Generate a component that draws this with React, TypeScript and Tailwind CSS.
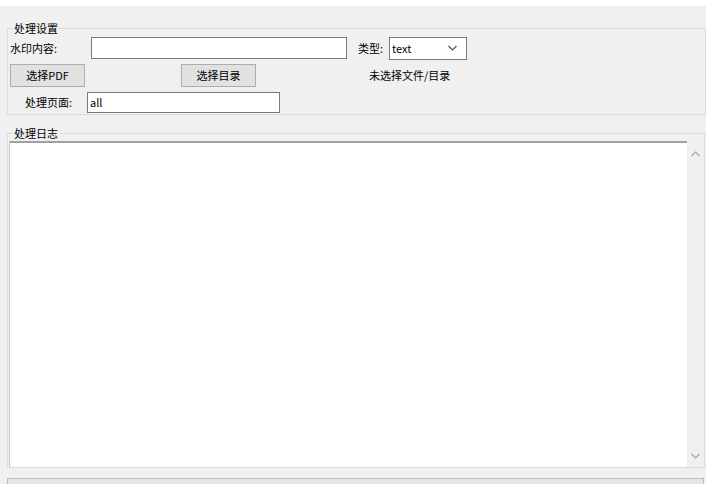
import React from 'react';

const font = { fontFamily: '"Noto Sans CJK SC", "Noto Sans", sans-serif' };

function Btn({ children }: { children: React.ReactNode }) {
  return (
    <div className="flex h-[23px] w-[75px] items-center justify-center border border-[#adadad] bg-[#e1e1e1] text-black">
      {children}
    </div>
  );
}

function Chevron({ up, className }: { up?: boolean; className?: string }) {
  return (
    <svg width="9" height="6" viewBox="0 0 9 6" className={className}>
      <path
        d={up ? 'M0.5 5 L4.5 1 L8.5 5' : 'M0.5 1 L4.5 5 L8.5 1'}
        fill="none"
        stroke="currentColor"
        strokeWidth="1.2"
      />
    </svg>
  );
}

export default function App() {
  return (
    <div
      className="flex h-[484px] w-[706px] flex-col overflow-hidden bg-[#f0f0f0] text-[11px] leading-none text-black"
      style={font}
    >
      <div className="h-[6px] shrink-0 bg-white" />

      {/* 处理设置 */}
      <div className="relative ml-[7px] mt-[22px] h-[87px] w-[699px] shrink-0 border border-[#dcdcdc]">
        <span className="absolute -top-[8px] left-[5px] bg-[#f0f0f0] px-[1px] leading-[14px]">处理设置</span>

        <div className="mt-[8px] flex h-[22px] items-center">
          <span className="ml-[2px] w-[81px]">水印内容:</span>
          <div className="h-[22px] w-[256px] border border-[#7a7a7a] bg-white" />
          <span className="ml-[11px] w-[31px]">类型:</span>
          <div className="flex h-[23px] w-[78px] items-center justify-between border border-[#7a7a7a] bg-white pl-[2px] pr-[9px]">
            <span>text</span>
            <Chevron className="text-[#555]" />
          </div>
        </div>

        <div className="mt-[5px] flex h-[23px] items-center">
          <div className="ml-[2px]">
            <Btn>选择PDF</Btn>
          </div>
          <div className="ml-[96px]">
            <Btn>选择目录</Btn>
          </div>
          <span className="ml-[113px]">未选择文件/目录</span>
        </div>

        <div className="mt-[5px] flex h-[21px] items-center">
          <span className="ml-[17px] w-[62px]">处理页面:</span>
          <div className="flex h-[21px] w-[193px] items-center border border-[#7a7a7a] bg-white pl-[2px]">
            all
          </div>
        </div>
      </div>

      {/* 处理日志 */}
      <div className="relative ml-[7px] mt-[18px] flex h-[335px] w-[698px] shrink-0 flex-col border-l border-r border-t border-[#dcdcdc]">
        <span className="absolute -top-[8px] left-[5px] bg-[#f0f0f0] px-[1px] leading-[14px]">处理日志</span>
        <div className="ml-[1px] mt-[7px] flex h-[327px] border-b border-l border-b-[#dcdcdc] border-l-[#c8c8c8]">
          <div className="flex-1 border-t-2 border-[#a0a0a0] bg-white" />
          <div className="flex w-[17px] flex-col items-center justify-between bg-[#f0f0f0] pb-[8px] pt-[10px] text-[#a6a6a6]">
            <Chevron up />
            <Chevron />
          </div>
        </div>
      </div>

      <div className="ml-[7px] mt-[10px] h-[20px] w-[697px] shrink-0 border border-[#bcbcbc] bg-[#e6e6e6]" />
    </div>
  );
}
